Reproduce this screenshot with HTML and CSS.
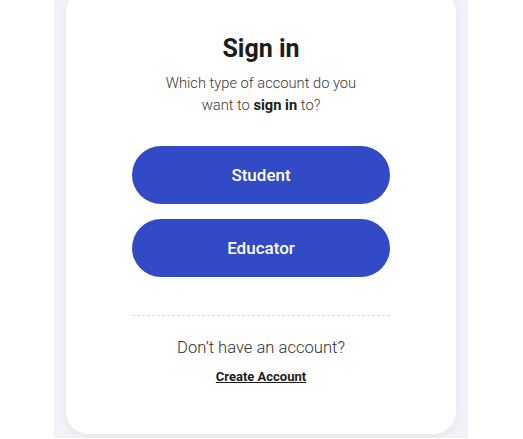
FILE: index.html
```html
<!DOCTYPE html>
<html lang="en">
<head>
    <meta charset="UTF-8">
    <meta name="viewport" content="width=device-width, initial-scale=1.0">
    <title>Sign in</title>
    <link rel="stylesheet" href="styles.css">
</head>
<body>
    <div class="panel">
        <div class="card">
            <!-- Header -->
            <h1 class="title">Sign in</h1>
            <p class="subtitle">Which type of account do you want to <strong>sign in</strong> to?</p>

            <!-- Account types -->
            <div class="choices">
                <button class="choice">Student</button>
                <button class="choice">Educator</button>
            </div>

            <hr class="divider">

            <!-- Footer -->
            <p class="no-account">Don&rsquo;t have an account?</p>
            <a class="create-link" href="#">Create Account</a>
        </div>
    </div>
</body>
</html>
```

FILE: styles.css
```css
/* Layout */
body {
    margin: 0;
    background: #fff;
    font-family: Roboto, "Liberation Sans", sans-serif;
    color: #1c1c1c;
}
.panel {
    width: 390px;
    height: 434px;
    margin: 0 auto 0 54px;
    padding: 0 12px 4px;
    background: #f2f2f8;
    overflow: hidden;
}
.card {
    height: 444px;
    margin-top: -10px;
    padding: 0 66px;
    box-sizing: border-box;
    background: #fff;
    border-radius: 22px;
    box-shadow: 0 2px 8px rgba(40, 40, 90, 0.07);
    display: flex;
    flex-direction: column;
    align-items: center;
    text-align: center;
}
.title {
    margin: 45px 0 0;
    font-size: 25px;
    line-height: 28px;
    font-weight: 700;
}
.subtitle {
    margin: 9px 0 0;
    width: 212px;
    font-size: 14.7px;
    line-height: 22px;
    font-weight: 300;
    color: #3a3a3a;
}
.subtitle strong {
    font-weight: 700;
    color: #1c1c1c;
}
.choices {
    margin-top: 30px;
    width: 100%;
    display: flex;
    flex-direction: column;
    gap: 15px;
}
.choice {
    height: 58px;
    border: none;
    border-radius: 29px;
    background: #334ac6;
    color: #fff;
    font-family: inherit;
    font-size: 17px;
    font-weight: 500;
    cursor: pointer;
}
.divider {
    width: 100%;
    margin: 38px 0 0;
    border: none;
    border-top: 1px dashed #dcdcdc;
}
.no-account {
    margin: 21px 0 0;
    font-size: 16.6px;
    line-height: 22px;
    font-weight: 300;
    color: #333;
}
.create-link {
    margin-top: 10px;
    font-size: 13px;
    font-weight: 700;
    color: #1c1c1c;
}
```
